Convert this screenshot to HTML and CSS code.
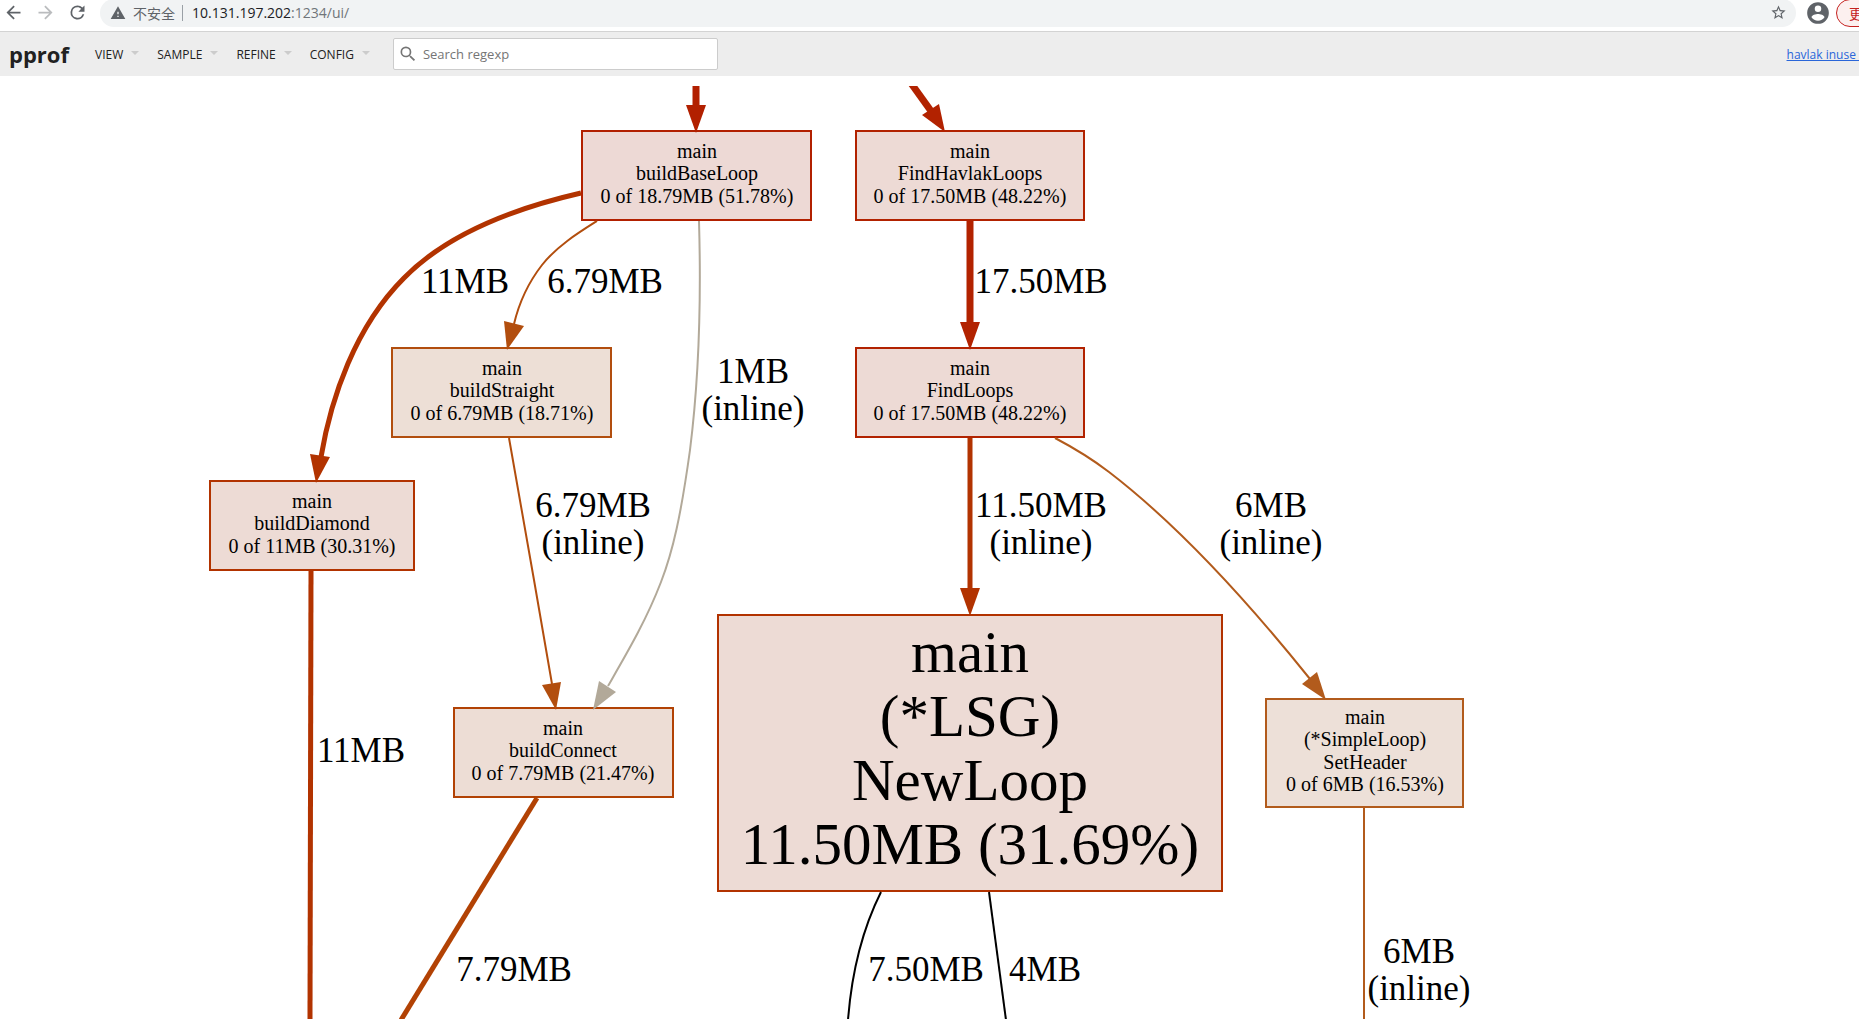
FILE: index.html
```html
<!DOCTYPE html>
<html lang="en">
<head>
<meta charset="utf-8">
<title>havlak inuse</title>
<link rel="stylesheet" href="styles.css">
</head>
<body>
<div class="browser">
  <button class="tool" aria-label="Back"><svg width="21" height="21" viewBox="0 0 24 24"><path d="M20 11H7.83l5.59-5.59L12 4l-8 8 8 8 1.41-1.41L7.83 13H20v-2z"/></svg></button>
  <button class="tool tool-off" aria-label="Forward"><svg width="21" height="21" viewBox="0 0 24 24"><path d="M12 4l-1.41 1.41L16.17 11H4v2h12.17l-5.58 5.59L12 20l8-8z"/></svg></button>
  <button class="tool" aria-label="Reload"><svg width="21" height="21" viewBox="0 0 24 24"><path d="M17.65 6.35A7.96 7.96 0 0 0 12 4a8 8 0 1 0 7.73 10h-2.08A6 6 0 1 1 12 6c1.66 0 3.14.69 4.22 1.78L13 11h7V4l-2.35 2.35z"/></svg></button>
  <div class="address">
    <svg class="warn" width="16" height="16" viewBox="0 0 24 24"><path d="M1 21h22L12 2 1 21zm12-3h-2v-2h2v2zm0-4h-2v-4h2v4z"/></svg>
    <span class="insecure">不安全</span>
    <span class="divider"></span>
    <span class="url"><b>10.131.197.202</b>:1234/ui/</span>
    <button class="star" aria-label="Bookmark"><svg width="17" height="17" viewBox="0 0 24 24"><path d="M22 9.24l-7.19-.62L12 2 9.19 8.63 2 9.24l5.46 4.73L5.82 21 12 17.27 18.18 21l-1.63-7.03L22 9.24zM12 15.4l-3.76 2.27 1-4.28-3.32-2.88 4.38-.38L12 6.1l1.71 4.04 4.38.38-3.32 2.88 1 4.28L12 15.4z"/></svg></button>
  </div>
  <button class="person" aria-label="Profile"><svg width="26" height="26" viewBox="0 0 24 24"><path d="M12 2a10 10 0 1 0 0 20 10 10 0 0 0 0-20zm0 3a3 3 0 1 1 0 6 3 3 0 0 1 0-6zm0 14.2a7.2 7.2 0 0 1-6-3.22c.03-1.99 4-3.08 6-3.08s5.97 1.09 6 3.08a7.2 7.2 0 0 1-6 3.22z"/></svg></button>
  <div class="update-slot"><button class="update">更新</button></div>
</div>

<header class="header">
  <h1 class="title">pprof</h1>
  <nav class="menu">
    <button class="menu-item">VIEW</button>
    <button class="menu-item">SAMPLE</button>
    <button class="menu-item">REFINE</button>
    <button class="menu-item">CONFIG</button>
  </nav>
  <label class="search">
    <svg width="20" height="20" viewBox="0 0 24 24"><path d="M15.5 14h-.79l-.28-.27A6.47 6.47 0 0 0 16 9.5 6.5 6.5 0 1 0 9.5 16c1.61 0 3.09-.59 4.23-1.57l.27.28v.79l5 4.99L20.49 19l-4.99-5zm-6 0a4.5 4.5 0 1 1 0-9 4.5 4.5 0 0 1 0 9z"/></svg>
    <input type="text" placeholder="Search regexp" aria-label="Search regexp">
  </label>
  <a class="profile" href="#">havlak inuse </a>
</header>

<main class="graph">
<svg class="canvas" role="img" aria-label="Call graph">
<g transform="translate(0 -86)">
  <g class="nodes">
    <rect x="582" y="131" width="229" height="89" fill="#edd9d5" stroke="#b22000"/>
    <rect x="856" y="131" width="228" height="89" fill="#eddad5" stroke="#b22200"/>
    <rect x="392" y="348" width="219" height="89" fill="#eddfd6" stroke="#b24e0e"/>
    <rect x="856" y="348" width="228" height="89" fill="#eddad5" stroke="#b22200"/>
    <rect x="210" y="481" width="204" height="89" fill="#eddbd5" stroke="#b23300"/>
    <rect x="454" y="708" width="219" height="89" fill="#edddd5" stroke="#b24204"/>
    <rect x="718" y="615" width="504" height="276" fill="#eddbd5" stroke="#b23200"/>
    <rect x="1266" y="699" width="197" height="108" fill="#ede0d8" stroke="#b25b1c"/>
  </g>

  <g class="edges">
    <g stroke="#b22000" fill="#b22000">
      <path class="line w7" d="M696 80V108"/>
      <path class="head" d="M686 105H706L696 133z"/>
    </g>
    <g stroke="#b22200" fill="#b22200">
      <path class="line w7" d="M908 79L931 111"/>
      <path class="head" d="M939 104L922 115L945 132z"/>
      <path class="line w7" d="M970 221V325"/>
      <path class="head" d="M960 322H980L970 350z"/>
    </g>
    <g stroke="#b23300" fill="#b23300">
      <path class="line w5" d="M581 193C520 207 450 231 404 278C355 327 331 398 321 457"/>
      <path class="head" d="M310 454L330 457L316 483z"/>
      <path class="line w5" d="M311 571L310 1019"/>
      <path class="line w5" d="M970 438V590"/>
      <path class="head" d="M960 588H980L970 616z"/>
    </g>
    <g stroke="#b24e0e" fill="#b24e0e">
      <path class="line w2" d="M597 221C578 233 557 246 542 265C528 283 519 303 514 324"/>
      <path class="head" d="M504 321L524 326L507 350z"/>
      <path class="line w2" d="M509 438L534 580L552 684"/>
      <path class="head" d="M542 685L561 682L556 710z"/>
    </g>
    <g stroke="#b2a999" fill="#b2a999">
      <path class="line w2" d="M699 221C701 290 700 370 690 450C681 515 673 551 661 582C646 621 627 653 608 686"/>
      <path class="head" d="M599 681L616 692L593 710z"/>
    </g>
    <path class="line w5" stroke="#b24204" d="M537 798L401 1020"/>
    <g stroke="#b25b1c" fill="#b25b1c">
      <path class="line w2" d="M1055 438C1074 448 1092 459 1109 472C1182 528 1253 608 1310 679"/>
      <path class="head" d="M1302 684L1317 672L1326 700z"/>
      <path class="line w2" d="M1364 807V1019"/>
    </g>
    <g stroke="#000">
      <path class="line w2" d="M881 892C863 928 852 968 848 1020"/>
      <path class="line w2" d="M989 892L1006 1020"/>
    </g>
  </g>

  <g class="small">
    <text x="697" y="158">main</text><text x="697" y="180">buildBaseLoop</text><text x="697" y="203">0 of 18.79MB (51.78%)</text>
    <text x="970" y="158">main</text><text x="970" y="180">FindHavlakLoops</text><text x="970" y="203">0 of 17.50MB (48.22%)</text>
    <text x="502" y="375">main</text><text x="502" y="397">buildStraight</text><text x="502" y="420">0 of 6.79MB (18.71%)</text>
    <text x="970" y="375">main</text><text x="970" y="397">FindLoops</text><text x="970" y="420">0 of 17.50MB (48.22%)</text>
    <text x="312" y="508">main</text><text x="312" y="530">buildDiamond</text><text x="312" y="553">0 of 11MB (30.31%)</text>
    <text x="563" y="735">main</text><text x="563" y="757">buildConnect</text><text x="563" y="780">0 of 7.79MB (21.47%)</text>
    <text x="1365" y="724">main</text><text x="1365" y="746">(*SimpleLoop)</text><text x="1365" y="769">SetHeader</text><text x="1365" y="791">0 of 6MB (16.53%)</text>
  </g>
  <g class="large">
    <text x="970" y="672">main</text><text x="970" y="736">(*LSG)</text><text x="970" y="800">NewLoop</text><text x="970" y="864">11.50MB (31.69%)</text>
  </g>
  <g class="label">
    <text x="465" y="293">11MB</text>
    <text x="605" y="293">6.79MB</text>
    <text x="1041" y="293">17.50MB</text>
    <text x="753" y="383">1MB</text><text x="753" y="420">(inline)</text>
    <text x="593" y="517">6.79MB</text><text x="593" y="554">(inline)</text>
    <text x="1041" y="517">11.50MB</text><text x="1041" y="554">(inline)</text>
    <text x="1271" y="517">6MB</text><text x="1271" y="554">(inline)</text>
    <text x="361" y="762">11MB</text>
    <text x="514" y="981">7.79MB</text>
    <text x="926" y="981">7.50MB</text>
    <text x="1045" y="981">4MB</text>
    <text x="1419" y="963">6MB</text><text x="1419" y="1000">(inline)</text>
  </g>
</g>
</svg>
</main>
</body>
</html>
```
FILE: styles.css
```css
* { box-sizing: border-box; }

body {
  margin: 0;
  height: 100vh;
  display: flex;
  flex-direction: column;
  overflow: hidden;
  background: #fff;
  font-family: "Open Sans", "Noto Sans CJK SC", sans-serif;
  font-size: 12px;
  color: #212121;
}

button {
  border: 0;
  padding: 0;
  background: none;
  font: inherit;
  color: inherit;
}

svg { display: block; flex: none; }

/* Browser bar */
.browser {
  display: flex;
  align-items: center;
  height: 32px;
  padding: 0 0 6px 3px;
  border-bottom: 1px solid #d3d3d3;
  color: #5f6368;
  fill: #5f6368;
  flex: none;
}
.tool { margin-right: 11px; }
.tool-off { fill: #babcbe; }
.address {
  flex: 1;
  display: flex;
  align-items: center;
  height: 28px;
  margin-left: 1px;
  padding: 0 9px 0 10px;
  border-radius: 14px;
  background: #f1f3f4;
  font-size: 14px;
}
.insecure { margin-left: 7px; font-family: "Noto Sans CJK SC", sans-serif; }
.divider { width: 1px; height: 16px; margin: 0 9px 0 7px; background: #9aa0a6; }
.url { flex: 1; color: #70757a; }
.url b { font-weight: 400; color: #202124; }
.person { margin: 0 5px 0 9px; }
.update-slot { width: 23px; overflow: hidden; }
.update {
  width: 64px;
  height: 28px;
  padding-left: 12px;
  border: 1px solid #c5221f;
  border-radius: 14px;
  background: #fcf0ef;
  color: #c5221f;
  font-family: "Noto Sans CJK SC", sans-serif;
  font-size: 14px;
  text-align: left;
  white-space: nowrap;
}

/* pprof toolbar */
.header {
  display: flex;
  align-items: center;
  height: 44px;
  padding-left: 9px;
  background: #ededed;
  flex: none;
}
.title { margin: 0 26px 0 0; font-size: 22px; line-height: 30px; font-weight: 700; }
.menu { display: flex; gap: 18px; }
.menu-item { display: flex; align-items: center; gap: 8px; }
.menu-item::after {
  content: "";
  border: 4px solid transparent;
  border-top-color: #ccc;
  border-bottom: 0;
  margin-bottom: 3px;
}
.search {
  display: flex;
  align-items: center;
  width: 325px;
  height: 32px;
  margin-left: 23px;
  padding-left: 4px;
  border: 1px solid #ccc;
  border-radius: 2px;
  background: #fff;
  fill: #757575;
}
.search input {
  flex: 1;
  min-width: 0;
  margin-left: 5px;
  padding: 0;
  border: 0;
  outline: 0;
  font: inherit;
  font-size: 13px;
}
.search input::placeholder { color: #757575; opacity: 1; }
.profile { margin-left: auto; white-space: pre; color: #2a66d9; }

/* Call graph */
.graph { flex: 1; min-height: 0; padding-top: 10px; }
.canvas { width: 100%; height: 100%; overflow: hidden; }
.nodes rect { stroke-width: 2px; }
.line { fill: none; }
.head { stroke: none; }
.w2 { stroke-width: 2px; }
.w5 { stroke-width: 5px; }
.w7 { stroke-width: 7px; }
.canvas text { font-family: "Liberation Serif", serif; fill: #000; text-anchor: middle; }
.small text { font-size: 20px; }
.label text { font-size: 35px; }
.large text { font-size: 59px; }
```
